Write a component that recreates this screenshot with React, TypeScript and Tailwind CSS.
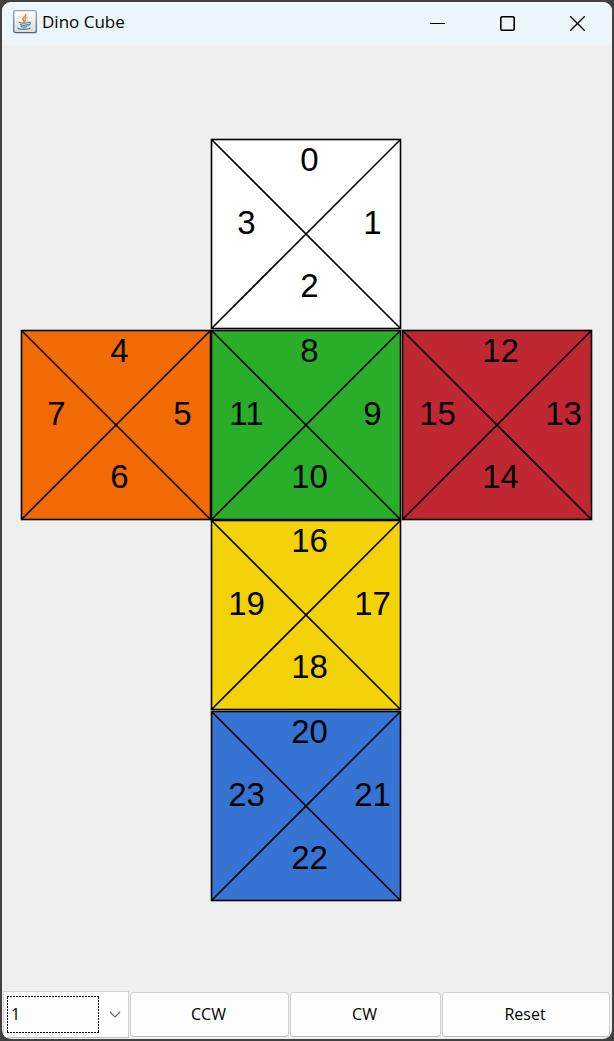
import { useState } from "react";

type Face = { x: number; y: number; fill: string; first: number };

const SIZE = 189;

const initialFaces: Face[] = [
  { x: 191, y: 1, fill: "#ffffff", first: 0 },
  { x: 1, y: 192, fill: "#f16a04", first: 4 },
  { x: 191, y: 192, fill: "#2aae2a", first: 8 },
  { x: 382, y: 192, fill: "#bf2832", first: 12 },
  { x: 191, y: 382, fill: "#f3d307", first: 16 },
  { x: 191, y: 573, fill: "#3574d2", first: 20 },
];

// Label anchors in clockwise order: top, right, bottom, left.
const anchors = [
  { x: 98, y: 31 },
  { x: 161, y: 94 },
  { x: 98, y: 157 },
  { x: 35, y: 94 },
];

function CubeFace({ face }: { face: Face }) {
  return (
    <g transform={`translate(${face.x + 0.5} ${face.y + 0.5})`}>
      <rect width={SIZE} height={SIZE} fill={face.fill} stroke="#000" strokeWidth="1.6" />
      <path d={`M0 0L${SIZE} ${SIZE}M${SIZE} 0L0 ${SIZE}`} stroke="#000" strokeWidth="1.6" />
      {anchors.map((a, i) => (
        <text key={i} x={a.x} y={a.y} textAnchor="middle" className="text-[33px]">
          {face.first + i}
        </text>
      ))}
    </g>
  );
}

function JavaIcon() {
  return (
    <svg width="24" height="24" viewBox="0 0 24 24" fill="none" aria-hidden="true">
      <defs>
        <linearGradient id="tile" x1="0" y1="0" x2="0" y2="1">
          <stop offset="0" stopColor="#ffffff" />
          <stop offset="1" stopColor="#dcdddf" />
        </linearGradient>
        <linearGradient id="rim" x1="0" y1="0" x2="0" y2="1">
          <stop offset="0" stopColor="#93a6b4" />
          <stop offset="1" stopColor="#47677f" />
        </linearGradient>
      </defs>
      <rect x="0.7" y="0.7" width="22.6" height="22" rx="2" fill="url(#tile)" stroke="url(#rim)" strokeWidth="1.3" />
      <path d="M12.8 4.2c.8 2-3.4 3-3 5 .2.9 1.2 1.2 1.5 2.2" stroke="#ee8420" strokeWidth="1.6" strokeLinecap="round" />
      <path d="M14.2 7.2c-2 .8-2.6 1.6-1.8 2.5.5.6.2 1.1-.4 1.6" stroke="#ee8420" strokeWidth="1.2" strokeLinecap="round" />
      <path d="M6.5 12.5c1.8.8 6.6.7 8.8 0M7.4 14.6c2 .8 5.3.7 7.2.1M8.2 16.5c1.8.7 4 .7 5.6 0M15.5 12.4c2.4-.7 2.6 1.8 0 2.8M5 18.2c-.4 1.3 10 1.4 12.2.1" stroke="#587f9f" strokeWidth="1.3" strokeLinecap="round" />
    </svg>
  );
}

const buttonClass =
  "h-[45px] min-w-0 rounded-[4px] border border-[#d0d0d0] border-b-[#bebebe] bg-[#fdfdfd] pr-0.5 pb-0.5 hover:bg-[#eef4f9]";

export default function App() {
  const [faces, setFaces] = useState(initialFaces);
  const [axis, setAxis] = useState("1");

  const turn = (step: number) =>
    setFaces((current) =>
      current.map((f, i) => ({ ...f, fill: current[(i + step + current.length) % current.length].fill })),
    );

  return (
    <div className="flex min-h-screen flex-col bg-[#414141] p-0.5 text-black font-['Open_Sans','Noto_Sans',sans-serif]">
      <div className="flex grow flex-col overflow-hidden rounded-[9px] bg-[#efefef]">
        <header className="flex h-[43px] shrink-0 items-center justify-between bg-[#ecf5f9] pl-[11px]">
          <div className="flex items-center gap-[5px] pb-1">
            <JavaIcon />
            <h1 className="text-[17px] leading-6">Dino Cube</h1>
          </div>
          <div className="flex h-10">
            <button type="button" aria-label="Minimize" className="grid w-[70px] place-items-center hover:bg-black/5">
              <svg width="15" height="15" viewBox="0 0 15 15" stroke="#000" aria-hidden="true">
                <path d="M0 7.5h15" />
              </svg>
            </button>
            <button type="button" aria-label="Maximize" className="grid w-[70px] place-items-center hover:bg-black/5">
              <svg width="15" height="15" viewBox="0 0 15 15" fill="none" stroke="#000" strokeWidth="1.6" aria-hidden="true">
                <rect x="0.8" y="0.8" width="13.4" height="13.4" rx="1.5" />
              </svg>
            </button>
            <button type="button" aria-label="Close" className="grid w-[70px] place-items-center hover:bg-red-500">
              <svg width="15" height="15" viewBox="0 0 15 15" stroke="#000" strokeWidth="1.4" aria-hidden="true">
                <path d="M0.3 0.3l14.4 14.4M14.7 0.3L0.3 14.7" />
              </svg>
            </button>
          </div>
        </header>

        <main className="flex grow items-center justify-center pt-[3px]">
          <svg
            width="574"
            height="764"
            viewBox="0 0 574 764"
            role="img"
            aria-label="Unfolded cube"
            className="max-w-full font-['Liberation_Sans',Arial,sans-serif]"
          >
            {faces.map((face) => (
              <CubeFace key={face.first} face={face} />
            ))}
          </svg>
        </main>

        <footer className="grid shrink-0 grid-cols-[126fr_159fr_151fr_168fr] items-center gap-px pr-0.5 pb-px pl-px text-[16px] leading-6">
          <div className="relative min-w-0">
            <select
              aria-label="Axis"
              value={axis}
              onChange={(e) => setAxis(e.target.value)}
              className="block h-[47px] w-full appearance-none border border-[#d0d0d0] border-b-[#bebebe] bg-[#fdfdfd] pr-8 pb-0.5 pl-[7px] outline-none"
            >
              {["1", "2", "3", "4", "5", "6", "7", "8"].map((n) => (
                <option key={n}>{n}</option>
              ))}
            </select>
            <span className="pointer-events-none absolute inset-y-[5px] right-[30px] left-1">
              <svg width="100%" height="100%" fill="none" aria-hidden="true" className="block">
                <rect width="100%" height="100%" stroke="#000" strokeWidth="2" strokeDasharray="2 1" />
              </svg>
            </span>
            <svg
              width="12"
              height="8"
              viewBox="0 0 12 8"
              fill="none"
              stroke="#666"
              strokeWidth="1.2"
              aria-hidden="true"
              className="pointer-events-none absolute top-5 right-2"
            >
              <path d="M1 1l5 5 5-5" />
            </svg>
          </div>
          <button type="button" className={buttonClass} onClick={() => turn(-1)}>
            CCW
          </button>
          <button type="button" className={buttonClass} onClick={() => turn(1)}>
            CW
          </button>
          <button type="button" className={buttonClass} onClick={() => setFaces(initialFaces)}>
            Reset
          </button>
        </footer>
      </div>
    </div>
  );
}
